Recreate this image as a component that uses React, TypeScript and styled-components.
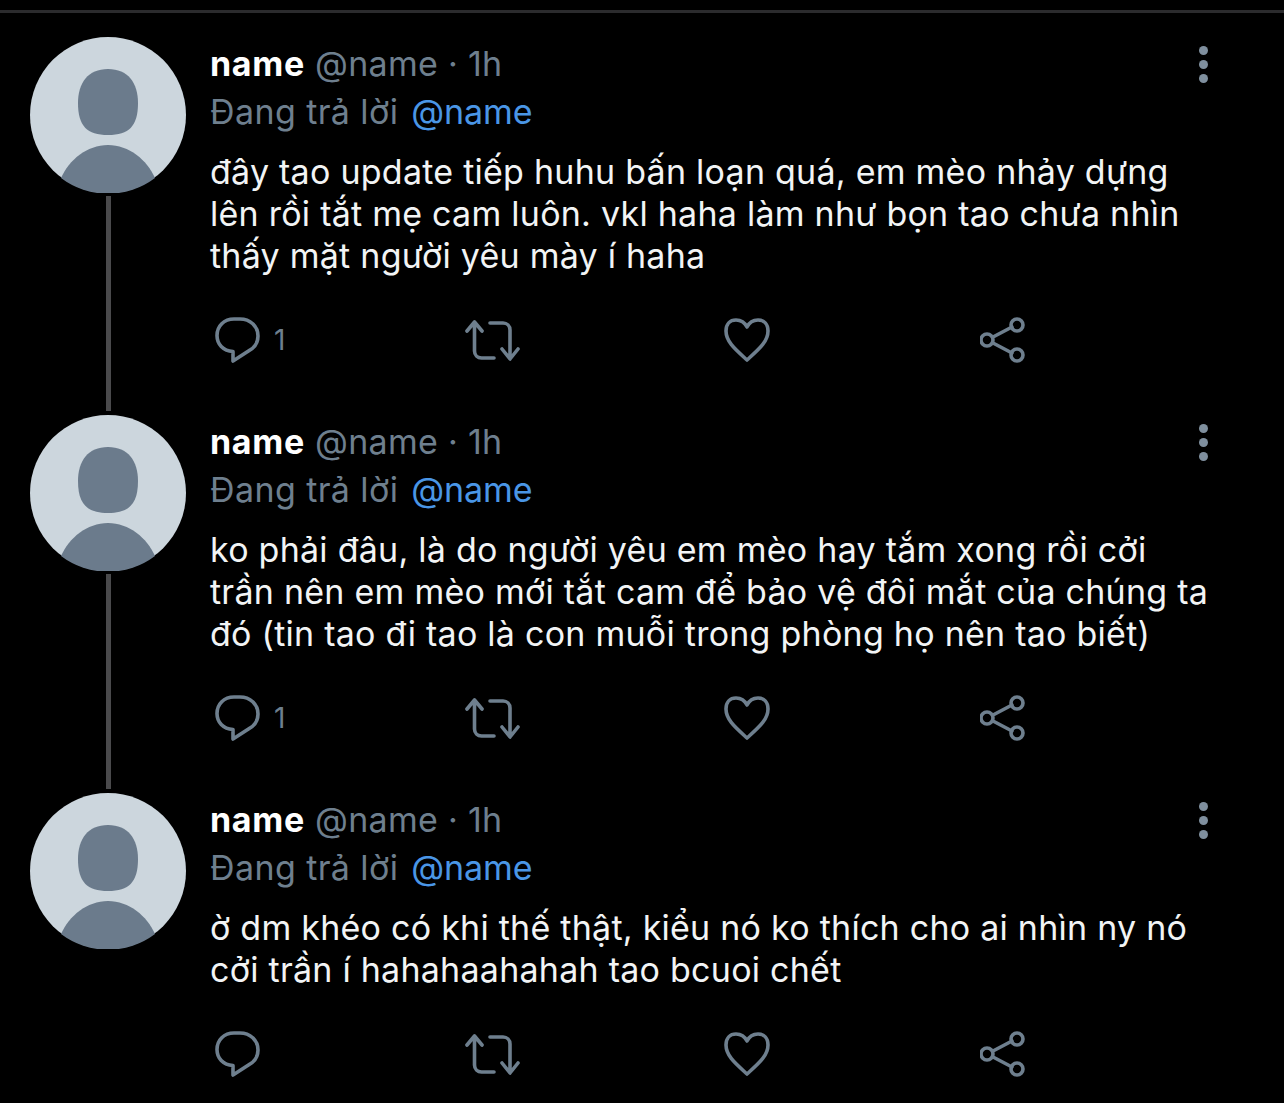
import styled, { createGlobalStyle } from 'styled-components'

const GlobalStyle = createGlobalStyle`
  html, body {
    margin: 0;
    background: #000;
  }
  body {
    font-family: Inter, "Noto Sans", sans-serif;
    overflow: hidden;
  }
`

const tweets = [
  {
    lines: [
      'đây tao update tiếp huhu bấn loạn quá, em mèo nhảy dựng',
      'lên rồi tắt mẹ cam luôn. vkl haha làm như bọn tao chưa nhìn',
      'thấy mặt người yêu mày í haha',
    ],
    replies: 1,
  },
  {
    lines: [
      'ko phải đâu, là do người yêu em mèo hay tắm xong rồi cởi',
      'trần nên em mèo mới tắt cam để bảo vệ đôi mắt của chúng ta',
      'đó (tin tao đi tao là con muỗi trong phòng họ nên tao biết)',
    ],
    replies: 1,
  },
  {
    lines: [
      'ờ dm khéo có khi thế thật, kiểu nó ko thích cho ai nhìn ny nó',
      'cởi trần í hahahaahahah tao bcuoi chết',
    ],
  },
]

function Avatar() {
  return (
    <AvatarSvg viewBox="0 0 156 156">
      <circle cx="78" cy="78" r="78" fill="#ccd6dd" />
      <path
        d="M78 32c-20 0-30 14-30 34 0 23 9 32 30 32s30-9 30-32c0-20-10-34-30-34z"
        fill="#6b7b8c"
      />
      <path
        d="M31 141c8-18 26-33 47-33s39 15 47 33a78 78 0 0 1-94 0z"
        fill="#6b7b8c"
      />
    </AvatarSvg>
  )
}

function ReplyIcon() {
  return (
    <Icon width="46" height="46" viewBox="0 0 46 46">
      <path d="M19 2h6c10 0 18 7 18 17 0 6-3 11-8 14L18 44V34.500C8 34 2 27 2 18.500 2 9 9 2 19 2z" />
    </Icon>
  )
}

function RetweetIcon() {
  return (
    <Icon width="56" height="46" viewBox="0 0 56 46">
      <path d="M2 14 9.500 5 17 14M9.500 6v28c0 4 3 7 7 7H29M25 6h13c4 0 7 3 7 7v28M37 32l8 10 8-10" />
    </Icon>
  )
}

function HeartIcon() {
  return (
    <Icon width="48" height="46" viewBox="0 0 48 46">
      <path d="M23 43C12 33 2 25 2 14 2 7 6 3 12 3c5 0 9 3 11 7 2-4 6-7 11-7 6 0 10 4 10 11 0 11-10 19-21 29z" />
    </Icon>
  )
}

function ShareIcon() {
  return (
    <Icon width="48" height="46" viewBox="0 0 48 46">
      <circle cx="7" cy="23" r="6" />
      <circle cx="37" cy="8" r="6" />
      <circle cx="37" cy="38" r="6" />
      <path d="m13 20 19-10M13 26l19 10" />
    </Icon>
  )
}

function App() {
  return (
    <>
      <GlobalStyle />
      <Page>
        <TopRule />
        {tweets.map((tweet, i) => (
          <Tweet key={i}>
            <Side>
              <Avatar />
              {i < tweets.length - 1 && <Connector />}
            </Side>
            <Main>
              <Header>
                <Meta>
                  <Name>name</Name>
                  <Muted>@name · 1h</Muted>
                </Meta>
                <More>
                  <Dot />
                  <Dot />
                  <Dot />
                </More>
              </Header>
              <ReplyTo>
                <Muted>Đang trả lời</Muted>
                <Mention>@name</Mention>
              </ReplyTo>
              <Body>
                {tweet.lines.map((line) => (
                  <div key={line}>{line}</div>
                ))}
              </Body>
              <Actions>
                <Action>
                  <ReplyIcon />
                  {tweet.replies && <Count>{tweet.replies}</Count>}
                </Action>
                <Action>
                  <RetweetIcon />
                </Action>
                <Action>
                  <HeartIcon />
                </Action>
                <Action>
                  <ShareIcon />
                </Action>
              </Actions>
            </Main>
          </Tweet>
        ))}
      </Page>
    </>
  )
}

export default App

const Page = styled.div`
  width: 1284px;
  height: 1103px;
  padding-top: 10px;
  box-sizing: border-box;
  overflow: hidden;
  background: #000;
`

const TopRule = styled.div`
  height: 3px;
  margin-bottom: 24px;
  background: #2b2b2d;
`

const Tweet = styled.article`
  display: flex;
  height: 378px;
  padding-left: 30px;
  gap: 24px;
`

const Side = styled.div`
  display: flex;
  flex-direction: column;
  align-items: center;
  width: 156px;
  flex: none;
`

const AvatarSvg = styled.svg`
  width: 156px;
  height: 156px;
  flex: none;
  display: block;
`

const Connector = styled.div`
  flex: 1;
  width: 5px;
  margin: 3px 0 4px;
  background: #4a4a4c;
`

const Main = styled.div`
  flex: 1;
  padding-top: 3px;
  min-width: 0;
`

const Header = styled.div`
  display: flex;
  justify-content: space-between;
  align-items: center;
  height: 48px;
  padding-right: 76px;
`

const Meta = styled.div`
  display: flex;
  gap: 10px;
  font-size: 34px;
  line-height: 48px;
  letter-spacing: 0.3px;
`

const Name = styled.span`
  color: #fff;
  font-weight: 700;
  letter-spacing: 0.7px;
`

const Muted = styled.span`
  color: #6e7f8e;
`

const More = styled.div`
  display: flex;
  flex-direction: column;
  gap: 5px;
`

const Dot = styled.span`
  width: 9px;
  height: 9px;
  border-radius: 50%;
  background: #7f8f9e;
`

const ReplyTo = styled.div`
  display: flex;
  gap: 13px;
  font-size: 34px;
  line-height: 48px;
  letter-spacing: 0.4px;
`

const Mention = styled.span`
  color: #4a96e6;
  letter-spacing: -0.1px;
`

const Body = styled.div`
  margin-top: 15px;
  color: #f2f4f5;
  font-size: 34px;
  line-height: 42px;
  letter-spacing: 0.25px;
  white-space: nowrap;
`

const Actions = styled.div`
  display: grid;
  grid-template-columns: 250px 259px 256px 1fr;
  margin-top: 40px;
  padding-left: 5px;
`

const Action = styled.div`
  display: flex;
  align-items: center;
  gap: 13px;
  height: 46px;
`

const Icon = styled.svg`
  fill: none;
  stroke: #6e7f8e;
  stroke-width: 3.600;
  stroke-linecap: round;
  stroke-linejoin: round;
  flex: none;
`

const Count = styled.span`
  color: #6e7f8e;
  font-size: 28px;
`
